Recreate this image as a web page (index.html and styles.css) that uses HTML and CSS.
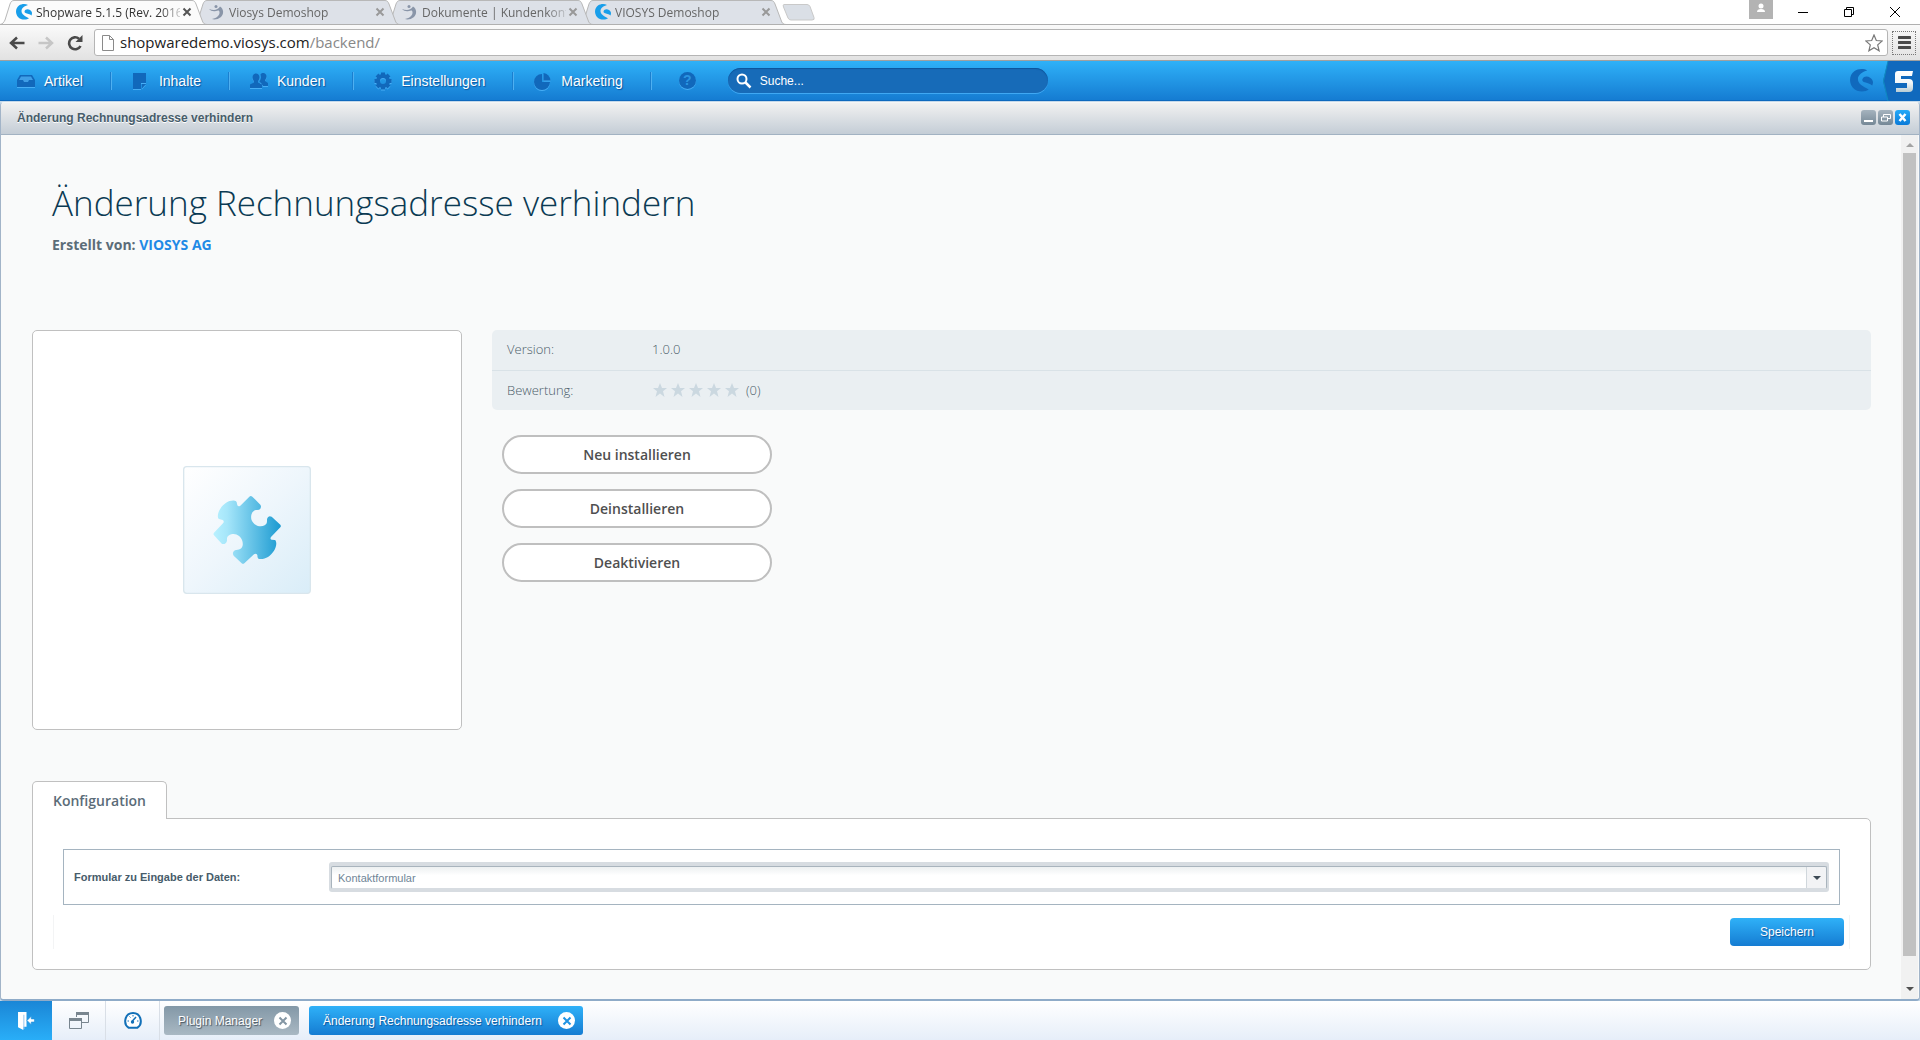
FILE: index.html
```html
<!DOCTYPE html>
<html lang="de">
<head>
<meta charset="utf-8">
<title>Shopware 5.1.5 (Rev. 2016)</title>
<link rel="stylesheet" href="styles.css">
</head>
<body>
<svg class="defs" aria-hidden="true">
  <defs>
    <symbol id="swirl" viewBox="0 0 32 32"><path d="M24 2C17 4 11 8 11 14C11 21 18 24 26 28.500C22 32 10 33 4 26C-2 19-1 8 6 3C11-.5 19-1 24 2z"/><path d="M17 15C18 10 24 9 28 12C32 15 33 18 31 23C28 20 22 19 19 18Q17 17 17 15z"/></symbol>
    <symbol id="viosys" viewBox="0 0 16 16"><circle cx="7" cy="2.500" r="1.500"/><path d="M0 5C5 7 9 6 11 2.500C15 5 15 10 12 13C9 15.500 5 16 3 15C8 14 11 11 10.500 8C10 6 9 6.500 7 7C4 7.500 2 7 0 5z"/></symbol>
    <symbol id="cross" viewBox="0 0 10 10"><path d="M1.500 1.500l7 7M8.500 1.500l-7 7" fill="none" stroke="currentColor" stroke-width="2"/></symbol>
    <symbol id="tabshape" viewBox="0 0 208 24"><path d="M0 24.500C3 24 4 22 5 20L10 4C11 1.500 12 .5 14 .5H192C194 .5 195 1.500 196 4L202 20C203 23 204 24.500 207 24.500"/></symbol>
    <symbol id="star" viewBox="0 0 16 16"><path d="M8 1l2 5h5l-4 3.300L12.500 15 8 11.500 3.500 15 5 9.300 1 6h5z"/></symbol>
  </defs>
</svg>
<header class="browser">
  <div class="tabstrip">
    <div class="tab active"><svg class="shape"><use href="#tabshape"/></svg><svg class="fav shopware"><use href="#swirl"/></svg><span class="name">Shopware 5.1.5 (Rev. 2016</span><button class="tab-close" aria-label="Tab schließen"><svg><use href="#cross"/></svg></button></div>
    <div class="tab second"><svg class="shape"><use href="#tabshape"/></svg><svg class="fav"><use href="#viosys"/></svg><span class="name">Viosys Demoshop</span><button class="tab-close" aria-label="Tab schließen"><svg><use href="#cross"/></svg></button></div>
    <div class="tab third"><svg class="shape"><use href="#tabshape"/></svg><svg class="fav"><use href="#viosys"/></svg><span class="name">Dokumente | Kundenkont</span><button class="tab-close" aria-label="Tab schließen"><svg><use href="#cross"/></svg></button></div>
    <div class="tab"><svg class="shape"><use href="#tabshape"/></svg><svg class="fav shopware"><use href="#swirl"/></svg><span class="name">VIOSYS Demoshop</span><button class="tab-close" aria-label="Tab schließen"><svg><use href="#cross"/></svg></button></div>
    <button class="newtab" aria-label="Neuer Tab"><svg viewBox="0 0 33 17"><path d="M2 .5h23q2 0 3 2l4 11q1 2.500-2 2.500H9q-2 0-3-2L1.500 3Q.5.5 2 .5z" fill="#dadfe6" stroke="#c9c9c9"/></svg></button>
    <div class="wincontrols">
      <button class="user" aria-label="Profil"><svg viewBox="0 0 24 19"><circle cx="12" cy="6" r="2.500" fill="#fff"/><path d="M8 12q0-3 4-3t4 3z" fill="#fff"/></svg></button>
      <button aria-label="Minimieren"><svg viewBox="0 0 12 12"><path d="M1 6.500h10" stroke="#000"/></svg></button>
      <button aria-label="Verkleinern"><svg viewBox="0 0 12 12"><path d="M3.500 3V1.500h7v7H9M1.500 3.500H8.500V10.500H1.500z" fill="none" stroke="#000"/></svg></button>
      <button aria-label="Schließen"><svg viewBox="0 0 12 12"><path d="M1 1l10 10M11 1L1 11" stroke="#000"/></svg></button>
    </div>
  </div>
  <div class="toolbar">
    <button class="nav" aria-label="Zurück"><svg viewBox="0 0 16 16"><path d="M1.500 8H15.500M8 2.500L2 8l6 5.500" fill="none" stroke="#4a4a4a" stroke-width="2.500"/></svg></button>
    <button class="nav" aria-label="Vorwärts"><svg viewBox="0 0 16 16"><path d="M.5 8H14.500M8 2.500L14 8l-6 5.500" fill="none" stroke="#c6c6c6" stroke-width="2.500"/></svg></button>
    <button class="nav" aria-label="Neu laden"><svg viewBox="0 0 16 16"><path d="M13.500 11A6 6 0 1 1 12 3.700" fill="none" stroke="#4a4a4a" stroke-width="2.600"/><path d="M15.500 0v7H8.500z" fill="#4a4a4a"/></svg></button>
    <div class="address">
      <svg class="page" viewBox="0 0 12 16"><path d="M.5.5h7l4 4v11H.5zM7.500.5v4h4" fill="#fff" stroke="#8a8a8a"/></svg>
      <span class="url">shopwaredemo.viosys.com<span>/backend/</span></span>
      <svg class="bookmark" viewBox="0 0 18 18"><path d="M9 1l2.300 5.500 5.900.5-4.500 3.900 1.400 5.900L9 13.700l-5.100 3.100 1.400-5.900L.8 7l5.900-.5z" fill="none" stroke="#777" stroke-width="1.200"/></svg>
    </div>
    <button class="burger" aria-label="Menü"><svg viewBox="0 0 13 13"><path d="M1 1.500h11M1 6.500h11M1 11.500h11" stroke="#4a4a4a" stroke-width="3" stroke-linecap="round"/></svg></button>
  </div>
</header>

<nav class="mainbar">
  <a href="#" class="item"><svg viewBox="0 0 18 18"><path d="M3 3h12l3 5v7H0V8z"/><path d="M2 8l2-3.500h10L16 8h-4l-1 2H7L6 8z" fill="#3f9ee6"/></svg>Artikel</a>
  <a href="#" class="item"><svg viewBox="0 0 18 18"><path d="M1 1h13v10h-5v6H1zM10 12h4L10 16.500z"/></svg>Inhalte</a>
  <a href="#" class="item"><svg viewBox="0 0 18 18"><path d="M10.500 2.500c2-2.500 6-1.500 6 2 0 2-1.500 3-1.500 4.500l3 2v3h-5l-2-3-1.500-1 1.500-4z"/><path d="M2.500 5.500c0-5.500 7-5.500 7 0 0 2-1.500 3-1.500 5l4 2V16H0v-3.500l4-2C4 8.500 2.500 7.500 2.500 5.500z"/></svg>Kunden</a>
  <a href="#" class="item"><svg viewBox="0 0 18 18"><path d="M9 4V.5M9 17.500V14M4 9H.5M17.500 9H14M5.500 5.500L3 3M15 15l-2.500-2.500M5.500 12.500L3 15M15 3l-2.500 2.500" stroke="#1168bb" stroke-width="4"/><circle cx="9" cy="9" r="5" fill="none" stroke="#1168bb" stroke-width="4"/></svg>Einstellungen</a>
  <a href="#" class="item"><svg viewBox="0 0 18 18"><path d="M8 2v8h8A8 8 0 1 1 8 2z"/><path d="M9.500 1A8 8 0 0 1 16.500 8.500h-7z"/></svg>Marketing</a>
  <a href="#" class="help" aria-label="Hilfe"><span>?</span></a>
  <label class="search"><svg viewBox="0 0 16 16"><circle cx="6" cy="6" r="4.500" fill="none" stroke="#fff" stroke-width="2"/><path d="M9.500 9.500L14.500 14.500" stroke="#fff" stroke-width="2.500"/></svg><input type="text" placeholder="Suche..." aria-label="Suche"></label>
  <svg class="logo"><use href="#swirl"/></svg>
  <div class="five"><svg viewBox="0 0 37 40"><defs><linearGradient id="silver" x2="0" y2="1"><stop offset="0" stop-color="#fff"/><stop offset=".55" stop-color="#f4f7f8"/><stop offset="1" stop-color="#b8ccd4"/></linearGradient></defs><path d="M5 0H37V40H5L0 20z" fill="#1069bd"/><path d="M5 0L.5 20 5 40" fill="none" stroke="#0f8cc0"/><path d="M15 10H30L29 15H18V18H26Q30 18 30 22V27Q30 31 26 31H13V27H24V22H12V13Q12 10 15 10z" fill="url(#silver)"/></svg></div>
</nav>

<section class="window">
  <div class="titlebar"><span>Änderung Rechnungsadresse verhindern</span>
    <div class="tools">
      <button aria-label="Minimieren"><svg viewBox="0 0 15 15"><path d="M3 11h9" stroke="#fff" stroke-width="2"/></svg></button>
      <button aria-label="Wiederherstellen"><svg viewBox="0 0 15 15"><path d="M5.500 7V4.500h7v4H10M3.500 7h6v4h-6z" fill="none" stroke="#fff"/></svg></button>
      <button class="close" aria-label="Schließen"><svg viewBox="0 0 15 15"><path d="M4.500 4l6 7M10.500 4l-6 7" stroke="#fff" stroke-width="2.500"/></svg></button>
    </div>
  </div>
  <div class="view">
    <main class="content">
      <h1>Änderung Rechnungsadresse verhindern</h1>
      <p class="by">Erstellt von: <a href="#">VIOSYS AG</a></p>
      <div class="detail">
        <div class="picture">
          <svg viewBox="39 51 384 384"><defs><linearGradient id="tile" x2="1" y2="1"><stop offset="0" stop-color="#fff"/><stop offset=".5" stop-color="#eef6fc"/><stop offset="1" stop-color="#d9edf8"/></linearGradient><linearGradient id="piece"><stop offset="0" stop-color="#b8f1ff"/><stop offset=".2" stop-color="#a6e6fa"/><stop offset="1" stop-color="#1b9ad1"/></linearGradient></defs>
          <rect x="41" y="53" width="380" height="380" rx="9" fill="url(#tile)" stroke="#d9e6ed" stroke-width="4"/>
          <path fill="url(#piece)" d="M238 143Q242 139 247 143L271 167Q275 172 271 179Q268 184 258 183C244 185 241 204 245 214C252 231 272 235 284 229C292 225 291 218 291 210Q294 198 305 203L331 227Q334 231 331 235L303 264Q299 270 305 272L315 273C321 277 320 294 312 305C301 322 285 332 268 330Q262 330 262 318Q258 311 252 316L223 343Q219 346 215 343L191 320Q187 315 190 308Q193 302 203 302C219 300 220 286 217 276C213 262 199 252 184 256C171 260 171 266 171 275Q168 287 156 285L132 259Q129 255 132 251L159 223Q164 217 158 213L147 210C141 206 143 190 151 179C162 163 177 153 194 155Q201 156 201 165Q203 176 211 170Z"/></svg>
        </div>
        <div class="facts">
          <dl><div><dt>Version:</dt><dd>1.0.0</dd></div>
          <div><dt>Bewertung:</dt><dd><span class="stars"><svg><use href="#star"/></svg><svg><use href="#star"/></svg><svg><use href="#star"/></svg><svg><use href="#star"/></svg><svg><use href="#star"/></svg></span>(0)</dd></div></dl>
          <div class="actions"><button>Neu installieren</button><button>Deinstallieren</button><button>Deaktivieren</button></div>
        </div>
      </div>
      <button class="configtab">Konfiguration</button>
      <form class="panel">
        <div class="field"><label for="formular">Formular zu Eingabe der Daten:</label>
          <div class="combo"><select id="formular"><option>Kontaktformular</option></select><svg viewBox="0 0 8 4"><path d="M0 0h8L4 4z" fill="#3d4a55"/></svg></div>
        </div>
        <div class="foot"><button type="button">Speichern</button></div>
      </form>
    </main>
    <div class="scrollbar"><svg viewBox="0 0 8 4"><path d="M0 4h8L4 0z" fill="#a3a3a3"/></svg><div class="thumb"></div><svg viewBox="0 0 8 4"><path d="M0 0h8L4 4z" fill="#505050"/></svg></div>
  </div>
</section>

<footer class="taskbar">
  <button class="logout" aria-label="Abmelden"><svg viewBox="0 0 16 17"><path d="M0 0h8v14H5v3L0 14.500z" fill="#fff"/><path d="M5.500 2.500V16" stroke="#9cc9ee"/><path d="M8.500 8L12.500 4v2.500H15.500v3H12.500V12z" fill="#fff" stroke="#1f8fdc" stroke-width=".6"/></svg></button>
  <button class="tool" aria-label="Fenster"><svg viewBox="0 0 20 17"><path d="M7.500 5V1.500h12v9h-7M.5 6.500h12v10H.5z" fill="none" stroke="#78858f"/><path d="M7 1.500h13M0 7.500h13" stroke="#78858f" stroke-width="3"/></svg></button>
  <button class="tool" aria-label="Leistung"><svg viewBox="-1 0 18 17"><path d="M3.500 15.700H12.500C18 12 16.500 1 8 1S-2 12 3.500 15.700z" fill="#fff" stroke="#1270b8" stroke-width="2"/><path d="M7 9.500L11 5" stroke="#1270b8" stroke-width="1.500"/><circle cx="7.500" cy="10" r="1.700" fill="#1270b8"/><path d="M2.500 9H4M4.500 4.500l1 1M8 3v1.500M12 9h1.500" stroke="#1270b8"/></svg></button>
  <button class="task">Plugin Manager<span><svg><use href="#cross"/></svg></span></button>
  <button class="task current">Änderung Rechnungsadresse verhindern<span><svg><use href="#cross"/></svg></span></button>
</footer>
</body>
</html>
```
FILE: styles.css
```css
* { box-sizing: border-box; }
body { margin: 0; min-height: 100vh; display: flex; flex-direction: column; font: 12px "Liberation Sans", Arial, sans-serif; background: #c5d9ea; }
button { font: inherit; padding: 0; margin: 0; border: 0; background: none; color: inherit; display: flex; align-items: center; justify-content: center; }
svg { display: block; flex: none; }
a { text-decoration: none; }
.defs { position: absolute; width: 0; height: 0; }

/* Browser frame */
.browser { font-family: "Open Sans", sans-serif; background: #fff; }
.tabstrip { display: flex; height: 24px; }
.tab { position: relative; z-index: 1; display: flex; align-items: center; width: 208px; height: 24px; margin-right: -15px; padding: 0 16px; color: #666; }
.tab.third { z-index: 2; }
.tab.second { z-index: 3; }
.tab.active { z-index: 4; color: #333; }
.shape { position: absolute; left: 0; top: 0; width: 208px; height: 24px; fill: #dde1e8; stroke: #b8b8b8; }
.active .shape { fill: #fbfbfb; }
.fav { position: relative; width: 16px; height: 16px; margin-right: 4px; fill: #8995a8; }
.fav.shopware { fill: #189eea; }
.name { position: relative; width: 144px; white-space: nowrap; -webkit-mask-image: linear-gradient(90deg, #000 124px, transparent 150px); mask-image: linear-gradient(90deg, #000 124px, transparent 150px); }
.tab-close { position: relative; margin-left: 2px; color: #999; }
.active .tab-close { color: #555; }
.tab-close svg { width: 10px; height: 10px; }
.newtab { width: 33px; margin: 0 auto 0 10px; }
.newtab svg { width: 33px; height: 17px; }
.wincontrols { display: flex; padding-right: 2px; }
.wincontrols button { width: 46px; }
.wincontrols svg { width: 12px; height: 12px; }
.wincontrols button.user { width: 24px; height: 19px; margin-right: 7px; background: #b3b3b3; }
.wincontrols .user svg { width: 24px; height: 19px; }
.toolbar { display: flex; align-items: center; height: 37px; padding: 0 4px 0 9px; border-top: 1px solid #b0b0b0; border-bottom: 1px solid #a0a0a0; background: linear-gradient(#fafafa, #e2e2e2); }
.nav { margin-right: 13px; }
.nav svg { width: 16px; height: 16px; }
.nav:nth-child(3) { margin-right: 11px; }
.address { flex: 1; display: flex; align-items: center; height: 27px; padding: 0 4px 0 7px; background: #fff; border: 1px solid #b5b5b5; border-radius: 3px; }
.page { width: 12px; height: 16px; }
.url { margin-left: 6px; flex: 1; padding-bottom: 1px; font-size: 15px; line-height: 24px; color: #222; }
.url span { color: #888; }
.bookmark { width: 18px; height: 18px; }
.burger { width: 24px; height: 24px; margin-left: 4px; border: 1px dotted #777; }
.burger svg { width: 13px; height: 13px; }

/* Shopware menu */
.mainbar { display: flex; align-items: center; height: 40px; padding-left: 17px; background: linear-gradient(#2fb1f8, #157cd2); border-bottom: 1px solid #0e69bd; }
.item { display: flex; align-items: center; gap: 9px; height: 18px; margin-right: 20px; padding-right: 28px; border-right: 1px solid #4fb0f1; box-shadow: inset -1px 0 #1a7fcf; color: #fff; font-size: 14px; text-shadow: 1px 1px 1px #0c559c; }
.item svg { width: 18px; height: 18px; fill: #1168bb; filter: drop-shadow(0 1px 0 #47aef5); }
.help { width: 17px; height: 17px; margin: 0 32px 0 7px; border-radius: 50%; background: #1168bb; color: #2b95e2; font: bold 14px/17px "Liberation Sans", sans-serif; text-align: center; box-shadow: 0 1px #47aef5; }
.search { display: flex; align-items: center; gap: 8px; width: 320px; height: 25px; padding: 0 8px; border-radius: 13px; background: #176bb8; box-shadow: inset 0 1px 1px #0c559c, 0 1px #3fa8f3; }
.search svg { width: 16px; height: 16px; }
.search input { flex: 1; min-width: 0; padding: 0; border: 0; outline: 0; background: none; color: #fff; font: 12px "Liberation Sans", sans-serif; }
.search input::placeholder { color: #fff; opacity: 1; }
.logo { width: 23px; height: 23px; margin: 0 10px 0 auto; fill: #1069bd; }
.five svg { width: 37px; height: 40px; }

/* Plugin window */
.window { flex: 1; display: flex; flex-direction: column; margin-top: 1px; border: 1px solid #a2b4c8; border-top-color: #f6f6f6; border-bottom: 2px solid #8fabc8; border-radius: 4px; overflow: hidden; background: #f9fafa; }
.titlebar { display: flex; align-items: center; justify-content: space-between; height: 32px; padding: 0 9px 2px 16px; border-bottom: 1px solid #a2b2c2; background: linear-gradient(#f1f1f1, #c4cdd6); color: #475c6a; font-weight: bold; text-shadow: 0 1px #fff; }
.tools { display: flex; gap: 2px; }
.tools button { border-radius: 3px; background: linear-gradient(#a5b3be, #758896); }
.tools button.close { background: linear-gradient(#25aaf8, #0a7ad8); }
.tools svg { width: 15px; height: 15px; }
.view { flex: 1; display: flex; }
.content { flex: 1; padding: 41px 30px 27px 31px; font-family: "Open Sans", sans-serif; }
h1 { margin: 0 20px; font-size: 35px; line-height: 54px; font-weight: 300; color: #0b3a53; }
.by { margin: 5px 20px 75px; font-size: 14px; line-height: 20px; font-weight: bold; color: #5b6c78; }
.by a { color: #1f8ae6; }
.detail { display: flex; gap: 30px; }
.picture { width: 430px; height: 400px; display: flex; align-items: center; justify-content: center; border: 1px solid #c0c0c0; border-radius: 5px; background: #fff; }
.picture svg { width: 128px; height: 128px; }
.facts { flex: 1; }
dl { margin: 0; border-radius: 5px; background: #eaeff2; color: #4a5c69; font-size: 13px; font-weight: 300; }
dl div { display: flex; align-items: center; height: 40px; padding: 0 15px 2px; }
dl div + div { border-top: 1px solid #d9e2e7; }
dt { width: 145px; }
dd { margin: 0; display: flex; align-items: center; }
.stars { display: flex; gap: 2px; margin-right: 6px; fill: #cbd8e0; }
.stars svg { width: 16px; height: 16px; }
.actions { display: flex; flex-direction: column; gap: 15px; margin: 25px 10px; }
.actions button { width: 270px; height: 39px; border: 2px solid #bfbfbf; border-radius: 20px; background: #fff; color: #4f4f4f; font-size: 14px; font-weight: 600; }
.configtab { position: relative; width: 135px; height: 38px; margin-top: 51px; margin-bottom: -1px; border: 1px solid #c0c0c0; border-bottom: 0; border-radius: 5px 5px 0 0; background: #fff; color: #5b6c78; font-size: 14px; font-weight: 600; }
.panel { padding: 30px 30px 20px; border: 1px solid #c0c0c0; border-radius: 0 5px 5px 5px; background: #fff; font: 11px "Liberation Sans", sans-serif; }
.field { display: flex; align-items: center; height: 56px; padding: 0 10px; border: 1px solid #a5b4c0; }
.field label { width: 255px; font-weight: bold; color: #475c6a; }
.combo { flex: 1; position: relative; padding: 4px 2px 3px; border-radius: 3px; background: #d7dce1; }
.combo select { display: block; width: 100%; height: 23px; padding: 0 6px; border: 1px solid #a9b4bd; border-bottom-color: #d7dce1; border-radius: 2px; appearance: none; background: linear-gradient(90deg, #d0d7dc 1px, #f2f3f5 1px) right / 20px 100% no-repeat, linear-gradient(#edf0f1, #fff 40%); color: #6f8597; font: inherit; }
.combo svg { position: absolute; right: 8px; top: 14px; width: 8px; height: 4px; }
.foot { display: flex; justify-content: flex-end; align-items: center; height: 34px; margin: 10px -10px 0; padding-right: 5px; border: solid #f3f4f5; border-width: 0 1px; }
.foot button { width: 114px; height: 28px; border-radius: 4px; background: linear-gradient(#2fb1f8, #157cd2); color: #fff; font-size: 12px; text-shadow: 1px 1px 1px #0c559c; }
.scrollbar { display: flex; flex-direction: column; align-items: center; width: 17px; margin-right: 1px; padding: 8px 2px; background: #f1f1f1; }
.scrollbar svg { width: 8px; height: 4px; }
.thumb { flex: 1; width: 13px; margin: 6px 0 31px; background: #c1c1c1; }

/* Taskbar */
.taskbar { display: flex; align-items: center; height: 39px; background: linear-gradient(#fff, #e6eef9); }
.logout { width: 52px; height: 39px; background: linear-gradient(#1a86d6, #29aef8); }
.logout svg { width: 17px; height: 18px; }
.tool { width: 54px; height: 39px; border-right: 1px solid #d9dfe7; }
.tool svg { width: 20px; height: 17px; }
.task { justify-content: space-between; width: 135px; height: 29px; margin-left: 4px; padding: 0 8px 0 14px; border-radius: 3px; background: linear-gradient(#8398a7, #a9b8c3); color: #fff; font-size: 12px; text-shadow: 1px 1px 1px #44525e; }
.task.current { width: 274px; margin-left: 10px; background: linear-gradient(#2fb1f8, #157cd2); text-shadow: 1px 1px 1px #0c559c; }
.task span { display: flex; align-items: center; justify-content: center; width: 17px; height: 17px; border-radius: 50%; background: #fff; color: #8396a4; }
.task.current span { color: #1f93e3; }
.task span svg { width: 10px; height: 10px; }
```
